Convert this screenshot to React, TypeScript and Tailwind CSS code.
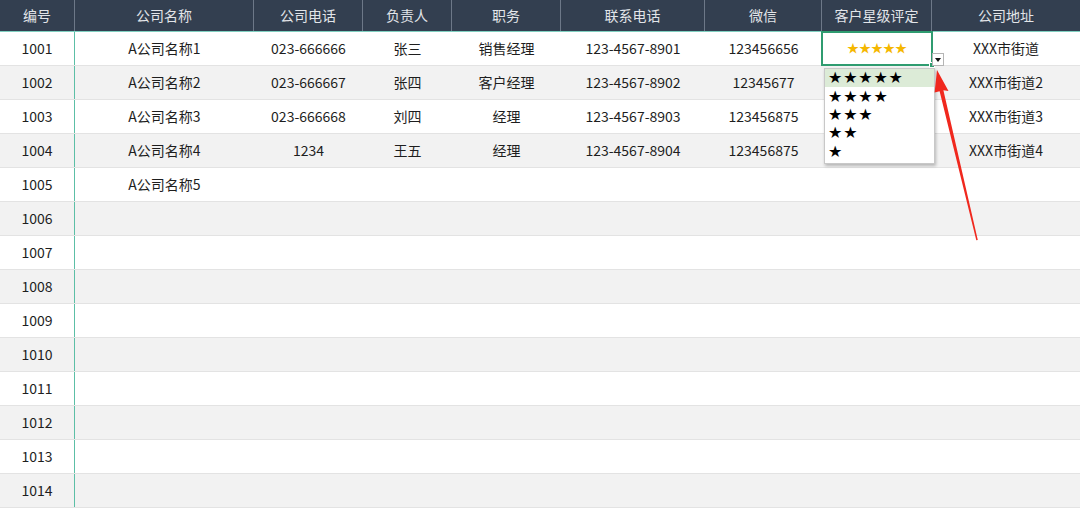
import React from 'react';

const font = { fontFamily: '"Noto Sans CJK SC", "Noto Sans", sans-serif' };
const starFont = { fontFamily: '"DejaVu Sans", sans-serif' };

const cols = [
  { title: '编号', w: 'w-[75px]' },
  { title: '公司名称', w: 'w-[179px]' },
  { title: '公司电话', w: 'w-[109px]' },
  { title: '负责人', w: 'w-[89px]' },
  { title: '职务', w: 'w-[109px]' },
  { title: '联系电话', w: 'w-[144px]' },
  { title: '微信', w: 'w-[117px]' },
  { title: '客户星级评定', w: 'w-[110px]' },
  { title: '公司地址', w: 'w-[148px]' },
];

const data: string[][] = [
  ['1001', 'A公司名称1', '023-666666', '张三', '销售经理', '123-4567-8901', '123456656', '★★★★★', 'XXX市街道'],
  ['1002', 'A公司名称2', '023-666667', '张四', '客户经理', '123-4567-8902', '12345677', '', 'XXX市街道2'],
  ['1003', 'A公司名称3', '023-666668', '刘四', '经理', '123-4567-8903', '123456875', '', 'XXX市街道3'],
  ['1004', 'A公司名称4', '1234', '王五', '经理', '123-4567-8904', '123456875', '', 'XXX市街道4'],
  ['1005', 'A公司名称5', '', '', '', '', '', '', ''],
];

for (let i = 1006; i <= 1014; i++) {
  data.push([String(i), '', '', '', '', '', '', '', '']);
}

const options = ['★★★★★', '★★★★', '★★★', '★★', '★'];

function Cell({ value, col, row }: { value: string; col: number; row: number }) {
  const selected = row === 0 && col === 7;
  return (
    <div
      className={`${cols[col].w} relative flex h-full items-center justify-center pb-[2px] ${
        col === 0 ? 'border-r border-[#5cbfa6]' : ''
      }`}
    >
      {selected ? (
        <>
          <span className="text-[12px] leading-none text-[#f5b700]">{value}</span>
          <div className="pointer-events-none absolute -inset-y-px -left-px -right-px z-10 border-2 border-[#2f9c70]" />
          <div className="absolute -bottom-[3px] -right-[3px] z-20 h-[6px] w-[6px] border border-white bg-[#2f9c70]" />
        </>
      ) : (
        value && <span className="text-[14px] leading-none text-[#1e1e1e]">{value}</span>
      )}
    </div>
  );
}

export default function App() {
  return (
    <div className="relative h-[508px] w-[1080px] overflow-hidden bg-white" style={font}>
      {/* header */}
      <div className="flex h-[32px] border-b border-[#7fcfc0] bg-[#333f50]">
        {cols.map((c, i) => (
          <div
            key={c.title}
            className={`${c.w} flex items-center justify-center text-[14px] text-[#e2e5e9] ${
              i < cols.length - 1 ? 'border-r border-[#6d7888]' : ''
            }`}
          >
            {c.title}
          </div>
        ))}
      </div>

      {/* rows */}
      {data.map((r, ri) => (
        <div
          key={r[0]}
          className={`flex h-[34px] border-b border-[#e3e3e3] ${ri % 2 === 0 ? 'bg-white' : 'bg-[#f2f2f2]'}`}
        >
          {r.map((v, ci) => (
            <Cell key={ci} value={v} col={ci} row={ri} />
          ))}
        </div>
      ))}

      {/* dropdown toggle */}
      <div className="absolute left-[932px] top-[53px] z-20 flex h-[13px] w-[12px] items-center justify-center border border-[#b5b5b5] bg-white">
        <svg width="6" height="4" viewBox="0 0 6 4">
          <path d="M0 0H6L3 4Z" fill="#111" />
        </svg>
      </div>

      {/* dropdown list */}
      <div className="absolute left-[824px] top-[68px] z-20 w-[111px] border border-[#c8c8c8] bg-white pb-[2px] shadow-[1px_2px_3px_rgba(0,0,0,0.25)]">
        {options.map((o, i) => (
          <div
            key={o}
            className={`flex h-[18.4px] items-center pl-[3px] text-[16px] leading-none tracking-[0.8px] text-black ${
              i === 0 ? 'bg-[#dcebd7]' : ''
            }`}
            style={starFont}
          >
            {o}
          </div>
        ))}
      </div>

      {/* red annotation arrow */}
      <svg className="pointer-events-none absolute left-0 top-0 z-30" width="1080" height="508" viewBox="0 0 1080 508">
        <polygon
          points="937,70 948.5,91 943.4,90.3 977.8,240 976.3,240.3 939.6,91.2 934.6,92.6"
          fill="#f0281e"
        />
      </svg>
    </div>
  );
}
